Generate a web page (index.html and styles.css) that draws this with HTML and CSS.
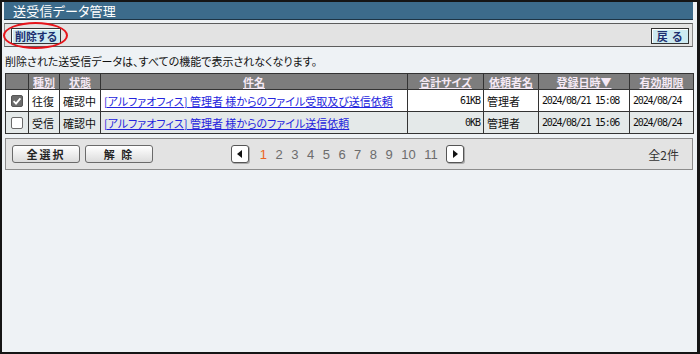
FILE: index.html
```html
<!DOCTYPE html>
<html lang="ja">
<head>
  <meta charset="UTF-8">
  <title>送受信データ管理</title>
  <link rel="stylesheet" href="styles.css">
</head>
<body>

  <div class="window">
    <div class="titlebar">送受信データ管理</div>

    <div class="toolbar">
      <span class="marked">
        <button type="button" class="tool-btn">削除する</button>
        <!-- red circle drawn over the delete button -->
        <span class="ring"></span>
      </span>
      <button type="button" class="tool-btn back">戻 る</button>
    </div>

    <p class="notice">削除された送受信データは、すべての機能で表示されなくなります。</p>

    <table class="list">
      <colgroup>
        <col style="width:23px">
        <col style="width:31px">
        <col style="width:41px">
        <col style="width:307px">
        <col style="width:76px">
        <col style="width:55px">
        <col style="width:91px">
        <col style="width:64px">
      </colgroup>
      <thead>
        <tr>
          <th></th>
          <th><a href="#">種別</a></th>
          <th><a href="#">状態</a></th>
          <th><a href="#">件名</a></th>
          <th><a href="#">合計サイズ</a></th>
          <th><a href="#">依頼者名</a></th>
          <th><a href="#">登録日時▼</a></th>
          <th><a href="#">有効期限</a></th>
        </tr>
      </thead>
      <tbody>
        <tr>
          <td class="chk">
            <svg width="12" height="12" viewBox="0 0 12 12">
              <rect x="0.5" y="0.5" width="11" height="11" rx="1.5" fill="#6b6b6b" stroke="#555"/>
              <path d="M2.6 6.2 L5 8.6 L9.4 3.4" fill="none" stroke="#fff" stroke-width="1.8"/>
            </svg>
          </td>
          <td>往復</td>
          <td>確認中</td>
          <td><a href="#" class="subject">[アルファオフィス] 管理者 様からのファイル受取及び送信依頼</a></td>
          <td class="num">61KB</td>
          <td>管理者</td>
          <td class="date">2024/08/21 15:08</td>
          <td class="date">2024/08/24</td>
        </tr>
        <tr class="alt">
          <td class="chk">
            <svg width="12" height="12" viewBox="0 0 12 12">
              <rect x="0.5" y="0.5" width="11" height="11" rx="1.5" fill="#fff" stroke="#6a6a6a"/>
            </svg>
          </td>
          <td>受信</td>
          <td>確認中</td>
          <td><a href="#" class="subject">[アルファオフィス] 管理者 様からのファイル送信依頼</a></td>
          <td class="num">0KB</td>
          <td>管理者</td>
          <td class="date">2024/08/21 15:06</td>
          <td class="date">2024/08/24</td>
        </tr>
      </tbody>
    </table>

    <div class="footer">
      <div class="select-btns">
        <button type="button" class="plain-btn">全選択</button>
        <button type="button" class="plain-btn">解 除</button>
      </div>
      <div class="pager">
        <span class="page-arrow">
          <svg width="6" height="8" viewBox="0 0 6 8"><path d="M5 0 L5 8 L0 4 Z" fill="#111"/></svg>
        </span>
        <span class="current">1</span>
        <a href="#">2</a>
        <a href="#">3</a>
        <a href="#">4</a>
        <a href="#">5</a>
        <a href="#">6</a>
        <a href="#">7</a>
        <a href="#">8</a>
        <a href="#">9</a>
        <a href="#">10</a>
        <a href="#">11</a>
        <span class="page-arrow">
          <svg width="6" height="8" viewBox="0 0 6 8"><path d="M1 0 L1 8 L6 4 Z" fill="#111"/></svg>
        </span>
      </div>
      <div class="count">全2件</div>
    </div>
  </div>

</body>
</html>
```

FILE: styles.css
```css
html, body {
  margin: 0;
  padding: 0;
}
body {
  font-family: "Noto Sans CJK JP", "Liberation Sans", sans-serif;
  font-feature-settings: "palt";
  font-size: 11px;
  color: #111;
  background-color: #eef2f5;
}
.window {
  width: 700px;
  height: 354px;
  box-sizing: border-box;
  border: 2px solid #151515;
  border-right-width: 3px;
  padding: 0 4px 0 2px;
  background-color: #eef2f5;
}
.titlebar {
  height: 17px;
  line-height: 17px;
  padding-left: 9px;
  background-color: #3c6b8b;
  border-bottom: 1px solid #1d3445;
  color: #ffffff;
  font-size: 13px;
  letter-spacing: 0.2px;
}
.toolbar {
  margin-top: 3px;
  display: flex;
  justify-content: space-between;
  align-items: flex-start;
  padding: 4px 3px 0 6px;
  box-sizing: border-box;
  height: 24px;
  background-color: #e3e3e3;
  border: 1px solid #5c5c5c;
  border-left-color: #8a8a8a;
  border-right-color: #8a8a8a;
}
.marked {
  position: relative;
  display: block;
}
.ring {
  position: absolute;
  left: -8px;
  top: -6px;
  width: 61px;
  height: 23px;
  border: 2px solid #e5141b;
  border-radius: 50%;
  pointer-events: none;
}
.tool-btn {
  display: block;
  font-family: inherit;
  font-feature-settings: "palt";
  height: 16px;
  padding: 0 3px;
  font-size: 11px;
  font-weight: bold;
  line-height: 13px;
  color: #1c2f70;
  background-color: #cdeaf1;
  border: 1px solid #333;
  box-shadow: inset 1px 1px 0 #ffffff;
  cursor: pointer;
}
.tool-btn.back {
  width: 38px;
  letter-spacing: 1px;
}
.notice {
  margin: 6px 0 4px 1px;
  line-height: 16px;
  font-size: 11px;
}
.list {
  margin-left: 1px;
  width: 688px;
  table-layout: fixed;
  border-collapse: collapse;
  border: 1px solid #333;
}
.list th {
  height: 15px;
  padding: 0;
  background-color: #7d7d7d;
  border: 1px solid #333;
  font-size: 11px;
  line-height: 14px;
  text-align: center;
}
.list th a {
  color: #f5e9f5;
  font-weight: bold;
  text-decoration: underline;
}
.list td {
  height: 21px;
  padding: 0 3px;
  border: 1px solid #333;
  background-color: #ffffff;
  white-space: nowrap;
  overflow: hidden;
}
.list tr.alt td {
  background-color: #e4e9e9;
}
.list td.chk {
  text-align: center;
  padding: 0;
}
.list td.chk svg {
  display: block;
  margin: 0 auto;
}
.subject {
  color: #2424dd;
  text-decoration: underline;
}
.num {
  text-align: right;
  font-family: "DejaVu Sans Mono", monospace;
  font-size: 10px;
  letter-spacing: -1px;
}
.date {
  font-family: "DejaVu Sans Mono", monospace;
  font-size: 10px;
  letter-spacing: -1.2px;
}
.footer {
  margin: 4px 0 0 1px;
  width: 688px;
  height: 32px;
  box-sizing: border-box;
  display: grid;
  grid-template-columns: 1fr auto 1fr;
  align-items: center;
  padding: 0 13px 0 6px;
  background-color: #e3e3e3;
  border: 1px solid #8c8c8c;
}
.select-btns {
  display: flex;
  gap: 5px;
}
.plain-btn {
  font-family: inherit;
  width: 68px;
  height: 18px;
  padding: 0;
  font-size: 11px;
  font-weight: bold;
  letter-spacing: 2px;
  line-height: 14px;
  color: #222;
  background: linear-gradient(#ffffff, #dcdcdc);
  border: 1px solid #6a6a6a;
  border-radius: 3px;
  cursor: pointer;
}
.pager {
  display: flex;
  align-items: center;
  font-family: "Liberation Sans", sans-serif;
  font-size: 13px;
  margin-left: 4px;
}
.pager a,
.pager .current {
  margin-right: 8.5px;
  color: #6c6c6c;
  text-decoration: none;
}
.pager .current {
  color: #ec6420;
}
.page-arrow {
  display: flex;
  align-items: center;
  justify-content: center;
  width: 16px;
  height: 16px;
  margin-right: 11px;
  background-color: #ffffff;
  border: 1px solid #555;
  border-radius: 3px;
  box-shadow: 1px 1px 0 #aaa;
}
.page-arrow:last-child {
  margin-right: 0;
}
.count {
  text-align: right;
  font-size: 12px;
  color: #333;
}
```
